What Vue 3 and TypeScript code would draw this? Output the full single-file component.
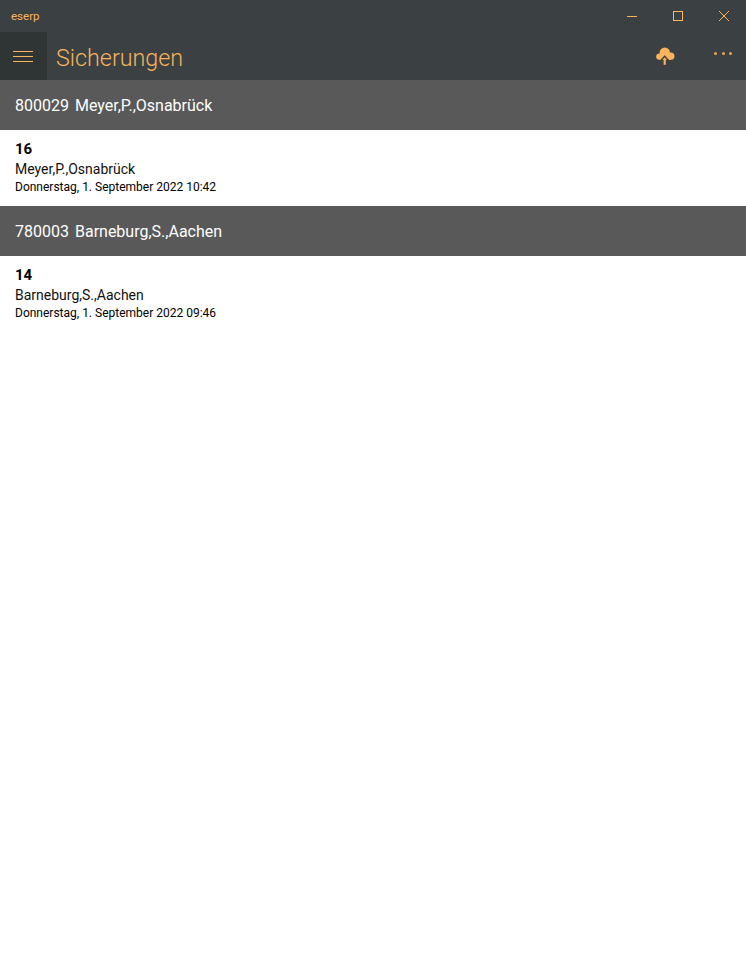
<template>
  <div class="app">
    <header class="chrome">
      <div class="titlebar">
        <span class="app-name">eserp</span>
        <div class="window-buttons">
          <button class="win-btn" aria-label="Minimieren">
            <svg width="12" height="12" viewBox="0 0 12 12"><path d="M1 6.5h10" stroke="currentColor" fill="none" /></svg>
          </button>
          <button class="win-btn" aria-label="Maximieren">
            <svg width="12" height="12" viewBox="0 0 12 12"><rect x="1.5" y="1.5" width="9" height="9" stroke="currentColor" fill="none" /></svg>
          </button>
          <button class="win-btn" aria-label="Schließen">
            <svg width="12" height="12" viewBox="0 0 12 12"><path d="M1 1l10 10M11 1L1 11" stroke="currentColor" fill="none" /></svg>
          </button>
        </div>
      </div>
      <div class="toolbar">
        <button class="menu-btn" aria-label="Menü">
          <span></span><span></span><span></span>
        </button>
        <h1 class="page-title">Sicherungen</h1>
        <button class="icon-btn upload" aria-label="Hochladen">
          <svg width="20" height="20" viewBox="0 0 20 20">
            <circle cx="4.4" cy="9.6" r="3.2" fill="currentColor" />
            <circle cx="9.8" cy="5.6" r="5.2" fill="currentColor" />
            <circle cx="15.8" cy="9.2" r="3.6" fill="currentColor" />
            <path fill="currentColor" d="M4.4 9h11.4v3.8H4.4z" />
            <path fill="none" stroke="#3b4142" stroke-width="1.5" d="M5.8 13.4l3.9-4.1 3.9 4.1" />
            <path fill="currentColor" d="M8.6 12.5h2.2v5.3H8.6z" />
          </svg>
        </button>
        <button class="icon-btn more" aria-label="Mehr">
          <i></i><i></i><i></i>
        </button>
      </div>
    </header>

    <section v-for="group in groups" :key="group.id">
      <div class="group-head">
        <span>{{ group.id }}</span>
        <span>{{ group.name }}</span>
      </div>
      <div class="entry">
        <div class="entry-no">{{ group.no }}</div>
        <div class="entry-name">{{ group.name }}</div>
        <div class="entry-date">{{ group.date }}</div>
      </div>
    </section>
  </div>
</template>

<script setup lang="ts">
interface BackupGroup {
  id: string;
  name: string;
  no: number;
  date: string;
}

const groups: BackupGroup[] = [
  { id: '800029', name: 'Meyer,P.,Osnabrück', no: 16, date: 'Donnerstag, 1. September 2022 10:42' },
  { id: '780003', name: 'Barneburg,S.,Aachen', no: 14, date: 'Donnerstag, 1. September 2022 09:46' }
];
</script>

<style scoped>
.app {
  min-height: 966px;
  background: #fff;
  font-family: Roboto, "Liberation Sans", sans-serif;
}

.chrome {
  background: #3b4142;
  color: #fbb45c;
}

.titlebar {
  height: 32px;
  display: flex;
  align-items: center;
  justify-content: space-between;
}

.app-name {
  margin-left: 11px;
  font-size: 11.5px;
}

.window-buttons {
  display: flex;
  margin-right: -1px;
}

.win-btn {
  width: 46px;
  height: 32px;
  padding: 0;
  border: 0;
  background: none;
  color: inherit;
  display: flex;
  align-items: center;
  justify-content: center;
}

.toolbar {
  height: 48px;
  display: flex;
  align-items: center;
}

.menu-btn {
  width: 47px;
  height: 48px;
  padding: 0 2px 0 0;
  border: 0;
  background: #2f3435;
  display: flex;
  flex-direction: column;
  align-items: center;
  justify-content: center;
  gap: 4px;
}

.menu-btn span {
  display: block;
  width: 20px;
  height: 1px;
  background: #fbb45c;
}

.page-title {
  flex: 1;
  margin: 4px 0 0 9px;
  font-size: 23.3px;
  font-weight: 300;
  color: #f5b25f;
}

.icon-btn {
  height: 48px;
  padding: 0;
  border: 0;
  background: none;
  color: inherit;
  display: flex;
  align-items: center;
  justify-content: center;
}

.upload {
  width: 46px;
  margin-right: 12px;
  padding-top: 2px;
}

.more {
  width: 46px;
  gap: 4.5px;
  margin-bottom: 6px;
}

.more i {
  width: 3px;
  height: 3px;
  background: #e8a656;
  border-radius: 50%;
}

.group-head {
  height: 50px;
  padding: 1px 0 0 15px;
  box-sizing: border-box;
  display: flex;
  align-items: center;
  gap: 6px;
  background: #595959;
  color: #fff;
  font-size: 16px;
  font-weight: 400;
}

.entry {
  height: 76px;
  padding: 10px 15px 0;
  box-sizing: border-box;
  color: #000;
}

.entry-no {
  font-size: 15px;
  line-height: 18px;
  font-weight: 700;
}

.entry-name {
  margin-top: 2px;
  font-size: 14px;
  line-height: 18px;
  color: #111;
}

.entry-date {
  font-size: 12px;
  line-height: 18px;
}
</style>
